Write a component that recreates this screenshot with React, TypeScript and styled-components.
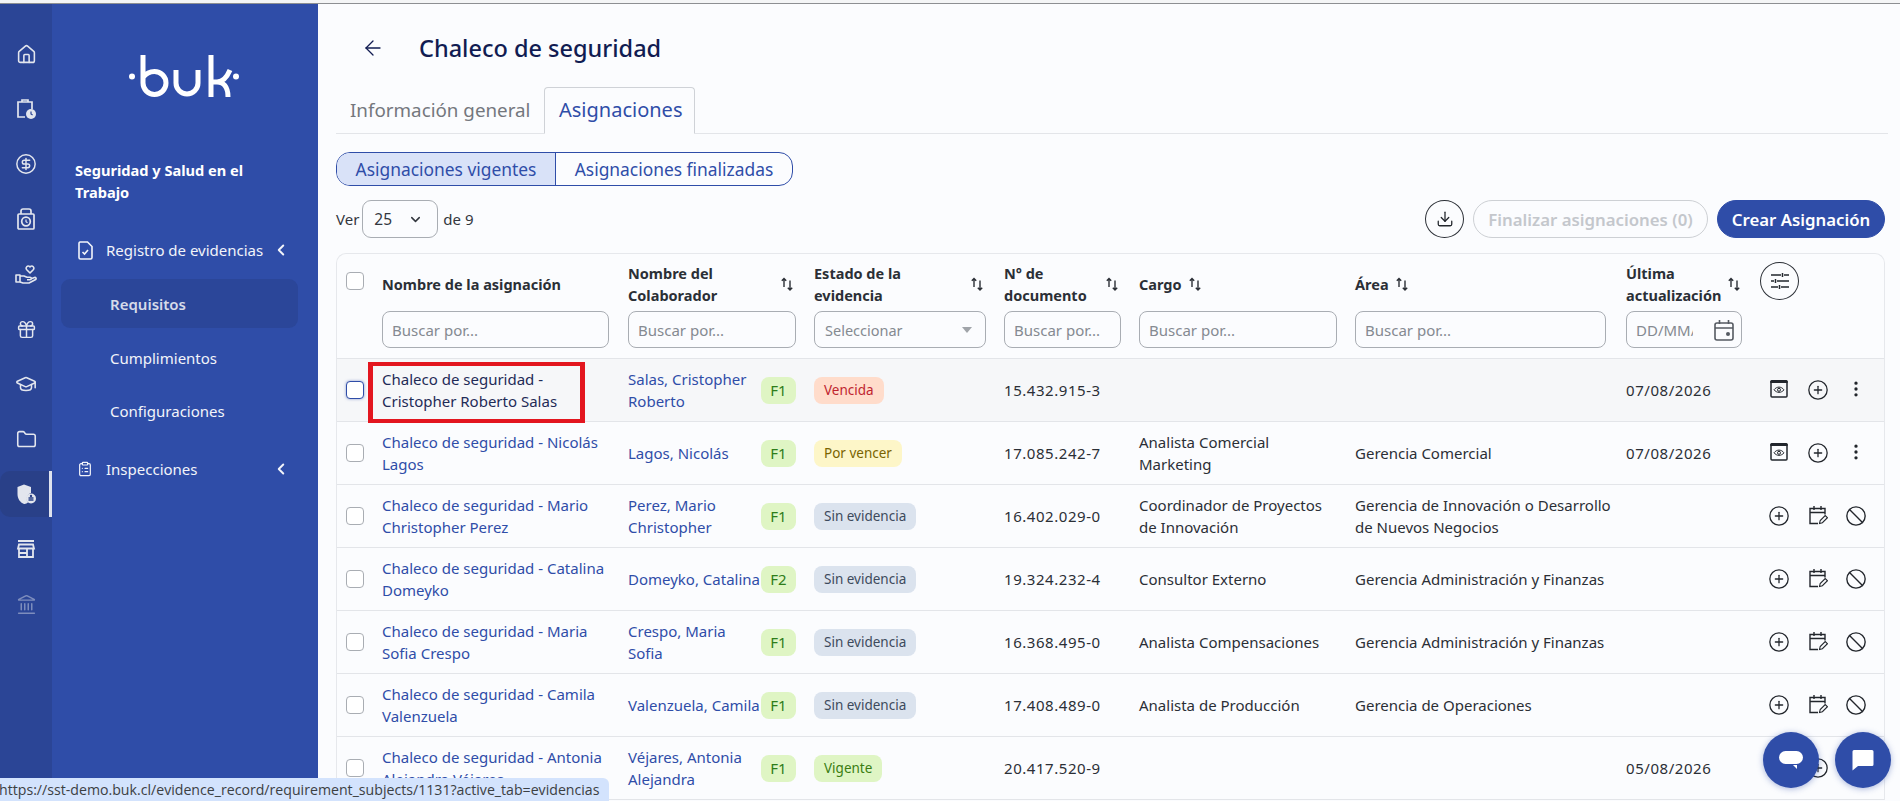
import React from "react";
import styled, { createGlobalStyle } from "styled-components";
import { ArrowLeft, Ban, ChevronDown, ChevronLeft, CirclePlus, ClipboardList, Download, EllipsisVertical, Folder, Gift, GraduationCap, House, Landmark, CircleDollarSign } from "lucide-react";

const FONT = `"Noto Sans", Lato, "Liberation Sans", sans-serif`;
const BLUE = "#2f4da8";

const Global = createGlobalStyle`
  html, body { margin: 0; height: 801px; overflow: hidden; background: #fbfcfe; }
  body { font-family: ${FONT}; font-size: 15px; color: #2b2f36; }
  * { box-sizing: border-box; }
`;

const Page = styled.div`display: flex; flex-direction: column; height: 801px;`;
const TopStrip = styled.div`height: 4px; flex: none; background: #f4f5f6; border-bottom: 1px solid #8d8f92;`;
const Body = styled.div`display: flex; flex: 1; min-height: 0;`;

const Rail = styled.nav`
  width: 52px; flex: none; background: #2b4596; display: flex; flex-direction: column; gap: 9px; padding-top: 27px;
`;
const RailItem = styled.div<{ $active?: boolean; $dim?: boolean }>`
  height: 46px; display: flex; align-items: center; justify-content: center; color: #e3e6ee;
  opacity: ${(p) => (p.$dim ? 0.45 : 1)};
  ${(p) => p.$active && `background: #294088; border-right: 3px solid #dfe3ee; border-radius: 10px 0 0 10px; padding-left: 3px;`}
`;

const Side = styled.aside`
  width: 266px; flex: none; background: ${BLUE}; color: #fff; padding-top: 51px;
`;
const LogoWrap = styled.div`display: flex; padding-left: 77px; margin-bottom: 62px;`;
const SideTitle = styled.div`
  font-size: 14.6px; font-weight: 700; line-height: 22px; padding-left: 23px; margin-bottom: 25px; white-space: pre-line;
`;
const NavRow = styled.div<{ $top?: number }>`
  height: 44px; display: flex; align-items: center; margin-top: ${(p) => p.$top ?? 0}px; padding-left: 23px; font-size: 15px; color: #f2f4fa;
  svg:first-child { margin-right: 13px; margin-left: 2px; }
`;
const NavLabel = styled.span`width: 166px; white-space: nowrap;`;
const SubItem = styled.div<{ $active?: boolean; $top?: number }>`
  height: 49px; margin: ${(p) => p.$top ?? 4}px 20px 0 9px; padding-left: 49px; display: flex; align-items: center; border-radius: 9px; font-size: 15px;
  color: ${(p) => (p.$active ? "#d6dbea" : "#f2f4fa")};
  font-weight: ${(p) => (p.$active ? 600 : 400)};
  background: ${(p) => (p.$active ? "#2b4699" : "transparent")};
`;

const Main = styled.main`flex: 1; min-width: 0; padding: 24px 12px 0 18px; background: #fbfcfe;`;
const Header = styled.div`height: 40px; display: flex; align-items: center; padding-left: 25px; color: #111c52;`;
const Title = styled.h1`margin: 0 0 0 34px; font-size: 23.500px; font-weight: 500; color: #111c52;`;
const Tabs = styled.div`margin-top: 19px; height: 47px; display: flex; align-items: flex-end; border-bottom: 1px solid #e3e5e9;`;
const Tab = styled.div<{ $active?: boolean }>`
  height: 47px; display: flex; align-items: center; margin-bottom: -1px; padding: 0 14px 2px; white-space: nowrap;
  font-size: ${(p) => (p.$active ? 20 : 18.800)}px;
  color: ${(p) => (p.$active ? BLUE : "#74777d")};
  ${(p) => p.$active ? `border: 1px solid #cfd2d7; border-bottom-color: #fbfcfe; border-radius: 4px 4px 0 0; width: 151px;` : `width: 208px;`}
`;
const Segment = styled.div`
  margin-top: 18px; width: 457px; height: 34px; display: flex; border: 1px solid ${BLUE}; border-radius: 14px; overflow: hidden; font-size: 17.400px; color: ${BLUE};
`;
const SegmentItem = styled.div<{ $active?: boolean; $w: number }>`
  width: ${(p) => p.$w}px; display: flex; align-items: center; justify-content: center; padding-bottom: 1px;
  background: ${(p) => (p.$active ? "#d9e2f8" : "transparent")};
  ${(p) => p.$active && `border-right: 1px solid ${BLUE};`}
`;
const Toolbar = styled.div`margin: 14px 3px 0 0; height: 38px; display: flex; align-items: center; font-size: 15px; color: #33373e;`;
const PageSelect = styled.div`
  width: 76px; height: 38px; margin: 0 5px 0 3px; border: 1px solid #a9adb3; border-radius: 9px; display: flex; align-items: center; justify-content: space-between; padding: 0 14px 0 11px; font-size: 15.500px;
`;
const Spacer = styled.div`flex: 1;`;
const CircleButton = styled.button`
  width: 39px; height: 38px; border-radius: 50%; border: 1px solid #2b2f36; background: transparent; display: flex; align-items: center; justify-content: center; padding: 0; color: #22262c;
`;
const PillButton = styled.button<{ $primary?: boolean }>`
  height: 38px; border-radius: 19px; font: 600 16.800px ${FONT}; padding: 0;
  width: ${(p) => (p.$primary ? 168 : 235)}px;
  margin-left: 9px;
  color: ${(p) => (p.$primary ? "#fff" : "#c4c7cc")};
  background: ${(p) => (p.$primary ? BLUE : "transparent")};
  border: 1px solid ${(p) => (p.$primary ? BLUE : "#cdd0d4")};
`;

const COLS = "45px 246px 186px 190px 135px 216px 271px 134px 1fr";
const Table = styled.div`
  margin: 15px 3px 0 0; border: 1px solid #e6e8ec; border-bottom: 0; border-radius: 10px 10px 0 0;
`;
const HeadRow = styled.div`
  display: grid; grid-template-columns: ${COLS}; height: 105px; border-bottom: 1px solid #e3e5e9;
`;
const HeadCell = styled.div<{ $pr?: number }>`
  display: flex; flex-direction: column; padding-right: ${(p) => p.$pr ?? 18}px;
`;
const HeadLabel = styled.div<{ $inline?: boolean }>`
  height: 57px; padding-top: 3px; display: flex; align-items: center; gap: 6px; font-weight: 700; font-size: 14.500px; line-height: 22px; color: #2b2f36;
  justify-content: ${(p) => (p.$inline ? "flex-start" : "space-between")};
  white-space: pre-line;
`;
const SortGlyph = styled.svg`flex: none; margin-right: 2px; color: #2b2f36;`;
const FilterInput = styled.input`
  width: 100%; height: 37px; border: 1px solid #a9adb3; border-radius: 8px; background: transparent; padding: 0 9px; font: 15px ${FONT}; color: #333; outline: none;
  &::placeholder { color: #858a91; opacity: 1; }
`;
const DateBox = styled.div`position: relative;`;
const DateInput = styled(FilterInput)`padding-right: 48px;`;
const DateIcon = styled.svg`position: absolute; right: 7px; top: 8px; color: #555a62;`;
const SelectBox = styled.div`
  height: 37px; border: 1px solid #a9adb3; border-radius: 8px; padding: 0 13px 0 10px; display: flex; align-items: center; justify-content: space-between; color: #858a91; font-size: 14.500px;
`;
const Caret = styled.span`
  width: 0; height: 0; border: 5px solid transparent; border-top: 6px solid #a0a4a9; border-bottom: 0;
`;
const TuneButton = styled(CircleButton)`margin-top: 8px;`;
const CheckCell = styled.div`display: flex; justify-content: flex-start; padding-left: 9px;`;
const HeadCheck = styled(CheckCell)`padding-top: 18px;`;
const Check = styled.span<{ $focus?: boolean }>`
  display: block; width: 18px; height: 18px; border-radius: 4px; background: #fff;
  border: 1px solid ${(p) => (p.$focus ? BLUE : "#a9adb3")};
  ${(p) => p.$focus && `box-shadow: 0 0 3px rgba(47,77,168,.55);`}
`;
const Row = styled.div<{ $hover?: boolean }>`
  position: relative; display: grid; grid-template-columns: ${COLS}; height: 63px; align-items: center; border-bottom: 1px solid #e3e5e9;
  background: ${(p) => (p.$hover ? "#f6f7f9" : "transparent")}; line-height: 22px; font-size: 15px;
`;
const NameLink = styled.div<{ $dark?: boolean }>`
  white-space: pre-line; color: ${(p) => (p.$dark ? "#1f2b57" : BLUE)};
`;
const CollabCell = styled.div`display: flex; align-items: center; justify-content: space-between; padding-right: 18px; white-space: pre-line; color: ${BLUE};`;
const Chip = styled.span<{ $bg: string; $fg: string }>`
  display: inline-flex; align-items: center; height: 27px; padding: 0 10px; border-radius: 8px; font-size: 13.500px; white-space: nowrap;
  background: ${(p) => p.$bg}; color: ${(p) => p.$fg};
`;
const Level = styled(Chip)`width: 35px; justify-content: center; padding: 0; font-size: 15px; flex: none;`;
const StateChip = styled(Chip)``;
const Cell = styled.div<{ $num?: boolean }>`white-space: pre-line; color: #2b2f36; letter-spacing: ${(p) => (p.$num ? "0.55px" : "0")};`;
const Actions = styled.div`display: grid; grid-template-columns: repeat(3, 38.500px); justify-items: center; color: #22262c;`;
const Highlight = styled.div`
  position: absolute; left: 31px; top: 3px; width: 217px; height: 61px; border: 4px solid #e3161f; border-left-width: 5px; border-right-width: 5px; pointer-events: none;
`;
const StatusBar = styled.div`
  position: fixed; left: 0; bottom: 0; width: 609px; height: 23px; background: #d3e3fd; border-top-right-radius: 6px; color: #3c4043;
  font: 14.150px "Open Sans", sans-serif; line-height: 23px; white-space: nowrap; overflow: hidden; text-indent: -1px;
`;
const Fab = styled.div<{ $left: number }>`
  position: fixed; top: 732px; left: ${(p) => p.$left}px; width: 56px; height: 56px; border-radius: 50%; background: ${BLUE}; display: flex; align-items: center; justify-content: center;
  box-shadow: 0 1px 6px rgba(47,77,168,.4);
`;

const Sort = () => (
  <SortGlyph width="14" height="16" viewBox="0 0 14 16" fill="none" stroke="currentColor" strokeWidth="1.400">
    <path d="M4 11V2.500M1.800 4.800 4 2.500l2.200 2.300M10 4.500V14M7.800 11.700 10 14l2.200-2.300" />
  </SortGlyph>
);
const Logo = () => (
  <svg width="110" height="42" viewBox="0 0 110 42" fill="none" stroke="#fff" strokeWidth="5" strokeLinecap="butt">
    <circle cx="3" cy="21.500" r="3" fill="#fff" stroke="none" />
    <path d="M14 0V28a11.500 11.500 0 1 0 11.500-11.500c-4.500 0-8.500 2-11.500 6" />
    <path d="M47 15V28a11 11 0 0 0 22 0V15" />
    <path d="M82 0V42M82 27h6c6 0 10-5 13-12M88 27c6 0 11 4 11 15" />
    <circle cx="107" cy="21.500" r="3" fill="#fff" stroke="none" />
  </svg>
);
const ClipClock = () => (
  <svg width="22" height="22" viewBox="0 0 22 22" fill="none" stroke="currentColor" strokeWidth="1.700">
    <path d="M10 19H3V4h14v7" /><path d="M7 4V2h6v2" />
    <circle cx="16" cy="16" r="5" fill="currentColor" stroke="none" />
    <path d="M16 13.500V16l1.600 1" stroke="#2b4596" strokeWidth="1.200" />
  </svg>
);
const LockClock = () => (
  <svg width="20" height="22" viewBox="0 0 20 22" fill="none" stroke="currentColor" strokeWidth="1.700">
    <rect x="2" y="6" width="16" height="15" rx="1" /><path d="M5 6V3a2 2 0 0 1 2-2h6a2 2 0 0 1 2 2v3" />
    <circle cx="10" cy="13.500" r="4.300" /><path d="M10 11.500v2.300l1.500 1" strokeWidth="1.200" />
  </svg>
);
const HandLove = () => (
  <svg width="22" height="22" viewBox="0 0 22 22" fill="none" stroke="currentColor" strokeWidth="1.600" strokeLinejoin="round">
    <rect x="1" y="12" width="4" height="7" />
    <path d="M5 13h4l3 1.200h3a1.300 1.300 0 0 1 0 2.600h-3M15.500 16l4-1.500a1.200 1.200 0 0 1 1.200 2L14 20H8l-3-1" />
    <path d="M15 10 11.500 6.500a2.200 2.200 0 0 1 3-3.100l.5.500.5-.5a2.200 2.200 0 0 1 3 3.100z" />
  </svg>
);
const StoreFront = () => (
  <svg width="20" height="20" viewBox="0 0 20 20" fill="none" stroke="currentColor" strokeWidth="2">
    <path d="M2 2h16" /><path d="M3 5.500h14l1 4H2z" strokeWidth="1.800" />
    <path d="M3 9v9h14V9M3 14h8M11 9.500V18" strokeWidth="1.800" />
  </svg>
);
const ShieldUser = () => (
  <svg width="22" height="22" viewBox="0 0 22 22">
    <path d="M9 1.500 16 4v6a6 6 0 0 0-3 9.600A5 5 0 0 1 9 21C5 19.500 2.500 15.500 2.500 11V4z" fill="currentColor" />
    <circle cx="16" cy="15.500" r="5" fill="currentColor" />
    <path d="M13.500 15h5M13.500 17h5" stroke="#294088" strokeWidth="1.300" /><circle cx="16" cy="13" r="1.200" fill="#294088" />
  </svg>
);
const FileCheck = () => (
  <svg width="16" height="19" viewBox="0 0 16 19" fill="none" stroke="currentColor" strokeWidth="1.600">
    <path d="M3 1h7.500L15 5.500V16.500A1.500 1.500 0 0 1 13.500 18h-10A1.500 1.500 0 0 1 2 16.500V2.500A1.500 1.500 0 0 1 3 1z" />
    <path d="M5.500 11l2 2 3.500-4" />
  </svg>
);
const Tune = () => (
  <svg width="20" height="18" viewBox="0 0 20 18" fill="none" stroke="currentColor" strokeWidth="1.500">
    <path d="M1 3h10M14 3h5M12.500 1v4M1 9h3M7 9h12M5.500 7v4M1 15h7M11 15h8M9.500 13v4" />
  </svg>
);
const EyeBox = () => (
  <svg width="20" height="20" viewBox="0 0 20 20" fill="none" stroke="currentColor">
    <path d="M2.500 1.500h15a.8.8 0 0 1 .8.8V3.500H1.700V2.300a.8.8 0 0 1 .8-.8z" fill="currentColor" strokeWidth="1" />
    <rect x="2" y="2" width="16" height="16" rx="1" strokeWidth="1.500" />
    <path d="M5 10.800c2.800-3.600 7.200-3.600 10 0-2.800 3.400-7.200 3.400-10 0z" strokeWidth="1" />
    <circle cx="10" cy="10.800" r="1.500" strokeWidth="1" />
  </svg>
);
const CalEdit = () => (
  <svg width="20" height="20" viewBox="0 0 20 20" fill="none" stroke="currentColor" strokeWidth="1.400">
    <path d="M10 18.500H2V3.500h15v6M2 7.500h15M6 1v4M13 1v4" />
    <path d="M11.500 18.500l.7-3 5-5 2.200 2.200-5 5z" fill="none" stroke="currentColor" strokeWidth="1.100" />
  </svg>
);

type Rec = { name: string; collab: string; level: string; state: string; doc: string; cargo?: string; area?: string; date?: string };
const STATES: Record<string, [string, string]> = {
  Vencida: ["#ffdccb", "#c0242f"],
  "Por vencer": ["#fdf6c8", "#7a6400"],
  "Sin evidencia": ["#dbe3ee", "#3d4a5c"],
  Vigente: ["#dff5c4", "#3a7d12"],
};
const ROWS: Rec[] = [
  { name: "Chaleco de seguridad -\nCristopher Roberto Salas", collab: "Salas, Cristopher\nRoberto", level: "F1", state: "Vencida", doc: "15.432.915-3", date: "07/08/2026" },
  { name: "Chaleco de seguridad - Nicolás\nLagos", collab: "Lagos, Nicolás", level: "F1", state: "Por vencer", doc: "17.085.242-7", cargo: "Analista Comercial\nMarketing", area: "Gerencia Comercial", date: "07/08/2026" },
  { name: "Chaleco de seguridad - Mario\nChristopher Perez", collab: "Perez, Mario\nChristopher", level: "F1", state: "Sin evidencia", doc: "16.402.029-0", cargo: "Coordinador de Proyectos\nde Innovación", area: "Gerencia de Innovación o Desarrollo\nde Nuevos Negocios" },
  { name: "Chaleco de seguridad - Catalina\nDomeyko", collab: "Domeyko, Catalina", level: "F2", state: "Sin evidencia", doc: "19.324.232-4", cargo: "Consultor Externo", area: "Gerencia Administración y Finanzas" },
  { name: "Chaleco de seguridad - Maria\nSofia Crespo", collab: "Crespo, Maria\nSofia", level: "F1", state: "Sin evidencia", doc: "16.368.495-0", cargo: "Analista Compensaciones", area: "Gerencia Administración y Finanzas" },
  { name: "Chaleco de seguridad - Camila\nValenzuela", collab: "Valenzuela, Camila", level: "F1", state: "Sin evidencia", doc: "17.408.489-0", cargo: "Analista de Producción", area: "Gerencia de Operaciones" },
  { name: "Chaleco de seguridad - Antonia\nAlejandra Véjares", collab: "Véjares, Antonia\nAlejandra", level: "F1", state: "Vigente", doc: "20.417.520-9", date: "05/08/2026" },
];

export default function App() {
  return (
    <Page>
      <Global />
      <TopStrip />
      <Body>
        <Rail>
          <RailItem><House size={21} strokeWidth={1.8} /></RailItem>
          <RailItem><ClipClock /></RailItem>
          <RailItem><CircleDollarSign size={22} strokeWidth={1.6} /></RailItem>
          <RailItem><LockClock /></RailItem>
          <RailItem><HandLove /></RailItem>
          <RailItem><Gift size={21} strokeWidth={1.7} /></RailItem>
          <RailItem><GraduationCap size={22} strokeWidth={1.7} /></RailItem>
          <RailItem><Folder size={21} strokeWidth={1.8} /></RailItem>
          <RailItem $active><ShieldUser /></RailItem>
          <RailItem><StoreFront /></RailItem>
          <RailItem $dim><Landmark size={21} strokeWidth={1.7} /></RailItem>
        </Rail>
        <Side>
          <LogoWrap><Logo /></LogoWrap>
          <SideTitle>{"Seguridad y Salud en el\nTrabajo"}</SideTitle>
          <NavRow><FileCheck /><NavLabel>Registro de evidencias</NavLabel><ChevronLeft size={18} strokeWidth={2.6} /></NavRow>
          <SubItem $active $top={7}>Requisitos</SubItem>
          <SubItem $top={5}>Cumplimientos</SubItem>
          <SubItem>Configuraciones</SubItem>
          <NavRow $top={12}><ClipboardList size={16} strokeWidth={1.8} /><NavLabel>Inspecciones</NavLabel><ChevronLeft size={18} strokeWidth={2.6} /></NavRow>
        </Side>
        <Main>
          <Header><ArrowLeft size={24} strokeWidth={1.3} /><Title>Chaleco de seguridad</Title></Header>
          <Tabs>
            <Tab>Información general</Tab>
            <Tab $active>Asignaciones</Tab>
          </Tabs>
          <Segment>
            <SegmentItem $active $w={219}>Asignaciones vigentes</SegmentItem>
            <SegmentItem $w={236}>Asignaciones finalizadas</SegmentItem>
          </Segment>
          <Toolbar>
            Ver
            <PageSelect>25<ChevronDown size={15} strokeWidth={2.4} /></PageSelect>
            de 9
            <Spacer />
            <CircleButton><Download size={18} strokeWidth={1.7} /></CircleButton>
            <PillButton>Finalizar asignaciones (0)</PillButton>
            <PillButton $primary>Crear Asignación</PillButton>
          </Toolbar>
          <Table>
            <HeadRow>
              <HeadCheck><Check /></HeadCheck>
              <HeadCell $pr={19}><HeadLabel>Nombre de la asignación</HeadLabel><FilterInput placeholder="Buscar por..." /></HeadCell>
              <HeadCell><HeadLabel>{"Nombre del\nColaborador"}<Sort /></HeadLabel><FilterInput placeholder="Buscar por..." /></HeadCell>
              <HeadCell><HeadLabel>{"Estado de la\nevidencia"}<Sort /></HeadLabel><SelectBox>Seleccionar<Caret /></SelectBox></HeadCell>
              <HeadCell><HeadLabel>{"N° de\ndocumento"}<Sort /></HeadLabel><FilterInput placeholder="Buscar por..." /></HeadCell>
              <HeadCell><HeadLabel $inline>Cargo<Sort /></HeadLabel><FilterInput placeholder="Buscar por..." /></HeadCell>
              <HeadCell $pr={20}><HeadLabel $inline>Área<Sort /></HeadLabel><FilterInput placeholder="Buscar por..." /></HeadCell>
              <HeadCell>
                <HeadLabel>{"Última\nactualización"}<Sort /></HeadLabel>
                <DateBox>
                  <DateInput placeholder="DD/MM/AAAA" />
                  <DateIcon width="22" height="22" viewBox="0 0 22 22" fill="none" stroke="currentColor" strokeWidth="1.600">
                    <rect x="2" y="4" width="18" height="17" rx="2" /><path d="M2 9h18M6.500 1v4M15.500 1v4" />
                    <circle cx="15" cy="15" r="2" fill="currentColor" stroke="none" />
                  </DateIcon>
                </DateBox>
              </HeadCell>
              <div><TuneButton><Tune /></TuneButton></div>
              <div />
            </HeadRow>
            {ROWS.map((r, i) => {
              const [bg, fg] = STATES[r.state];
              return (
                <Row key={r.doc} $hover={i === 0}>
                  <CheckCell><Check $focus={i === 0} /></CheckCell>
                  <NameLink $dark={i === 0}>{r.name}</NameLink>
                  <CollabCell>{r.collab}<Level $bg="#dff5c4" $fg="#2e7d1a">{r.level}</Level></CollabCell>
                  <div><StateChip $bg={bg} $fg={fg}>{r.state}</StateChip></div>
                  <Cell $num>{r.doc}</Cell>
                  <Cell>{r.cargo}</Cell>
                  <Cell>{r.area}</Cell>
                  <Cell $num>{r.date}</Cell>
                  <Actions>
                    {r.date ? (
                      <>
                        <EyeBox />
                        <CirclePlus size={22} strokeWidth={1.4} />
                        <EllipsisVertical size={20} strokeWidth={2} />
                      </>
                    ) : (
                      <>
                        <CirclePlus size={22} strokeWidth={1.4} />
                        <CalEdit />
                        <Ban size={22} strokeWidth={1.5} />
                      </>
                    )}
                  </Actions>
                  {i === 0 && <Highlight />}
                </Row>
              );
            })}
          </Table>
        </Main>
      </Body>
      <StatusBar>https://sst-demo.buk.cl/evidence_record/requirement_subjects/1131?active_tab=evidencias</StatusBar>
      <Fab $left={1763}>
        <svg width="24" height="24" viewBox="0 0 24 24"><rect x="0" y="3" width="24" height="13" rx="6.500" fill="#fff" /><path d="M14 17h4v4z" fill="#fff" /></svg>
      </Fab>
      <Fab $left={1835}>
        <svg width="24" height="24" viewBox="0 0 24 24"><path d="M3 2h18a1.500 1.500 0 0 1 1.500 1.500v13A1.500 1.500 0 0 1 21 18H7l-5.500 4.500V3.500A1.500 1.500 0 0 1 3 2z" fill="#fff" /></svg>
      </Fab>
    </Page>
  );
}
